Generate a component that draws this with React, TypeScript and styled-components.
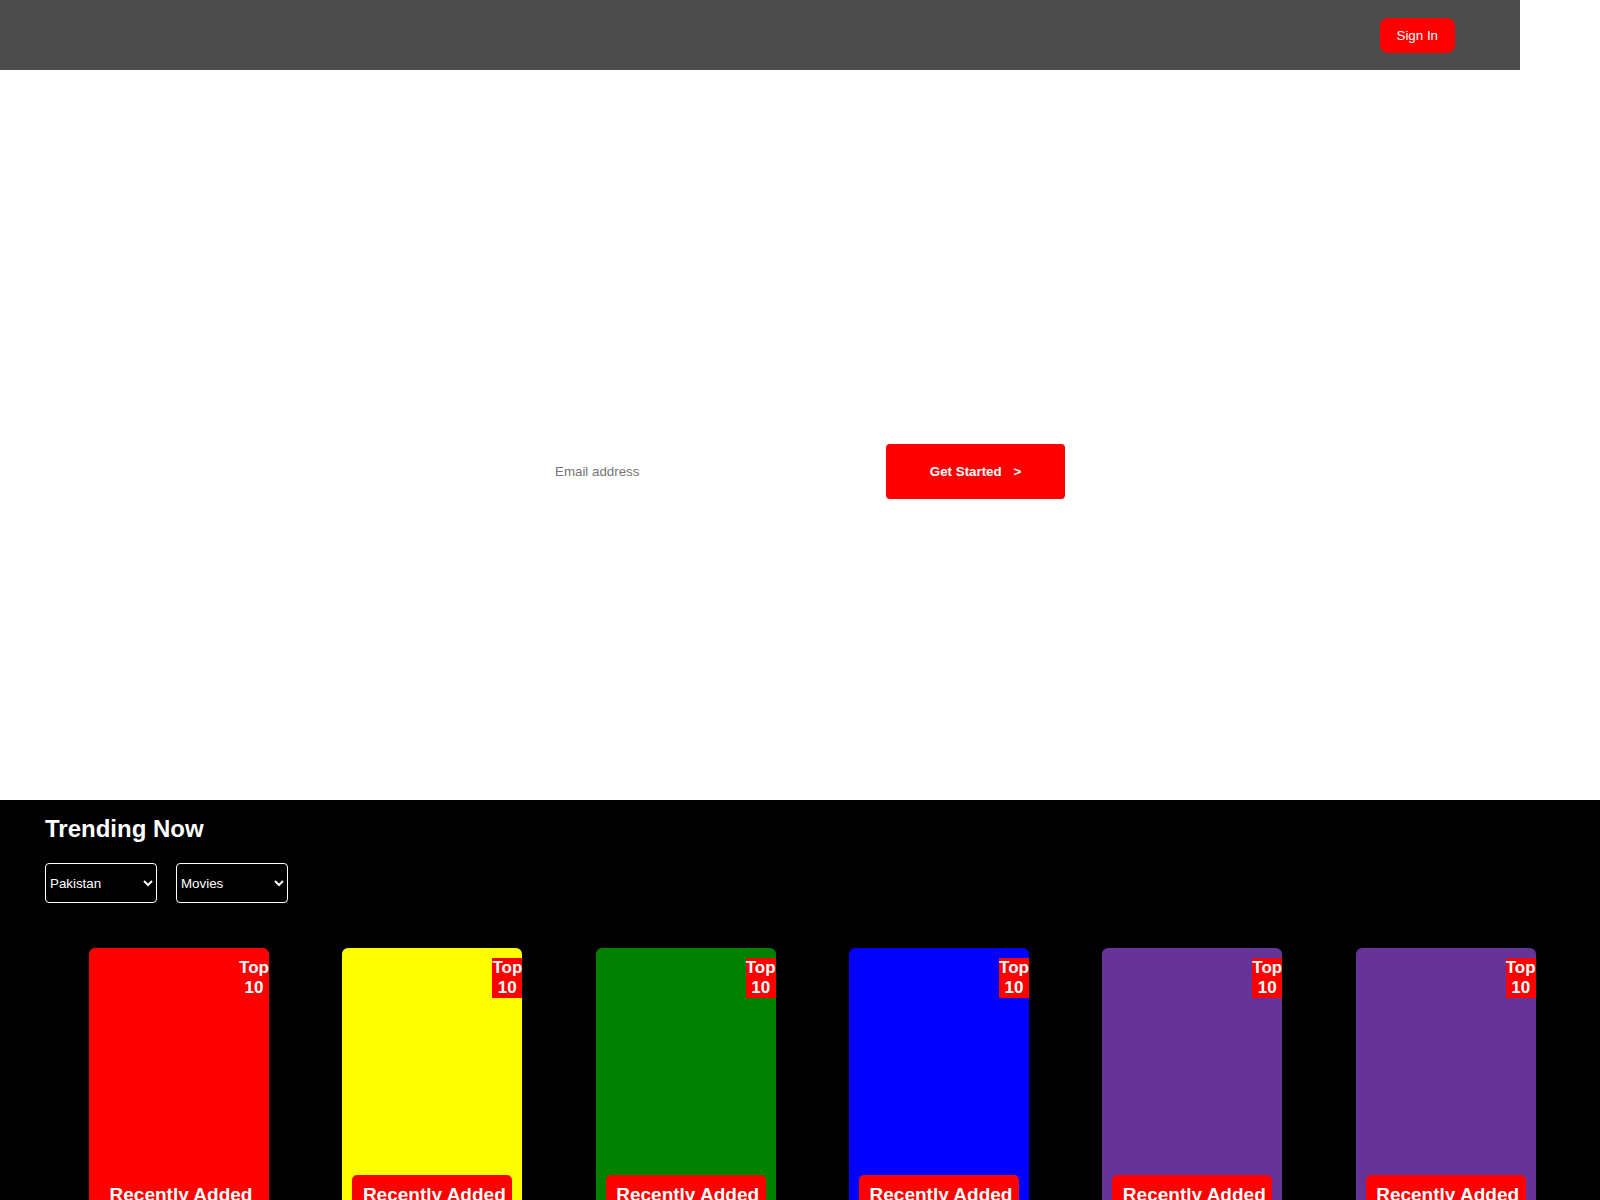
import { useState } from "react";
import styled, { createGlobalStyle } from "styled-components";

const GlobalStyle = createGlobalStyle`
    body {
        margin: 0;
        background: #fff;
        font-family: "Liberation Sans", Arial, sans-serif;
    }
    * {
        box-sizing: border-box;
    }
`

const Header = styled.header`
    width: 95%;
    height: 70px;
    background: rgba(0, 0, 0, 0.7);
    display: flex;
    align-items: center;
    justify-content: flex-end;
    padding-right: 65px;
`

const SignInButton = styled.button`
    background: red;
    color: white;
    border: none;
    border-radius: 8px;
    padding: 10px 17px;
    font-family: "Liberation Sans", Arial, sans-serif;
    font-size: 13.333px;
    line-height: normal;
    cursor: pointer;
`

const Hero = styled.section`
    height: 730px;
    display: flex;
    justify-content: center;
    align-items: flex-start;
    padding-top: 374px;
`

const EmailForm = styled.form`
    display: flex;
    width: 530px;
`

const EmailInput = styled.input`
    width: 351px;
    height: 55px;
    border: none;
    outline: none;
    background: transparent;
    padding: 0 20px;
    font-family: "Liberation Sans", Arial, sans-serif;
    font-size: 13.333px;
    &::placeholder {
        color: #757575;
    }
`

const StartButton = styled.button`
    width: 179px;
    height: 55px;
    background: red;
    color: white;
    border: none;
    border-radius: 4px;
    font-family: "Liberation Sans", Arial, sans-serif;
    font-size: 13.333px;
    font-weight: bold;
    cursor: pointer;
    span {
        margin-left: 8px;
    }
`

const Trending = styled.section`
    background: black;
    padding: 15px 45px 60px;
    min-height: 400px;
`

const Title = styled.h2`
    margin: 0;
    color: white;
    font-size: 24px;
    font-weight: bold;
    line-height: normal;
`

const Filters = styled.div`
    display: flex;
    gap: 19px;
    margin-top: 20px;
`

const Select = styled.select`
    width: 112px;
    height: 40px;
    background: black;
    color: white;
    border: 1px solid white;
    border-radius: 4px;
    font-family: "Liberation Sans", Arial, sans-serif;
    font-size: 13.333px;
    padding-left: 0;
`

const CardRow = styled.div`
    display: flex;
    gap: 73.33px;
    margin-top: 45px;
    padding-left: 44px;
`

const Card = styled.div<{ $bg: string }>`
    position: relative;
    flex: 0 0 180px;
    height: 280px;
    border-radius: 6px;
    background: ${p => p.$bg};
`

const TopBadge = styled.div`
    position: absolute;
    top: 10px;
    right: 0;
    width: 30px;
    background: red;
    color: white;
    font-size: 17px;
    font-weight: bold;
    line-height: 20px;
    text-align: center;
`

const AddedLabel = styled.div`
    position: absolute;
    left: 10px;
    right: 10px;
    bottom: 13px;
    background: red;
    color: white;
    border-radius: 5px;
    padding: 9px 4px 9px 8px;
    font-size: 19px;
    font-weight: bold;
    line-height: normal;
    text-align: center;
    white-space: nowrap;
`

const cards = ["#ff0000", "#ffff00", "#008000", "#0000ff", "#663399", "#663399"]

export default function App() {
    const [email, setEmail] = useState("")
    const [country, setCountry] = useState("Pakistan")
    const [kind, setKind] = useState("Movies")

    return <div>
        <GlobalStyle />
        <Header>
            <SignInButton>Sign In</SignInButton>
        </Header>
        <Hero>
            <EmailForm onSubmit={e => e.preventDefault()}>
                <EmailInput
                    type="email"
                    placeholder="Email address"
                    value={email}
                    onChange={e => setEmail(e.target.value)}
                />
                <StartButton type="submit">Get Started <span>&gt;</span></StartButton>
            </EmailForm>
        </Hero>
        <Trending>
            <Title>Trending Now</Title>
            <Filters>
                <Select value={country} onChange={e => setCountry(e.target.value)}>
                    <option>Pakistan</option>
                    <option>Global</option>
                </Select>
                <Select value={kind} onChange={e => setKind(e.target.value)}>
                    <option>Movies</option>
                    <option>TV Shows</option>
                </Select>
            </Filters>
            <CardRow>
                {
                    cards.map((bg, i) =>
                        <Card key={`card-${i}`} $bg={bg}>
                            <TopBadge>Top 10</TopBadge>
                            <AddedLabel>Recently Added</AddedLabel>
                        </Card>
                    )
                }
            </CardRow>
        </Trending>
    </div>
}
